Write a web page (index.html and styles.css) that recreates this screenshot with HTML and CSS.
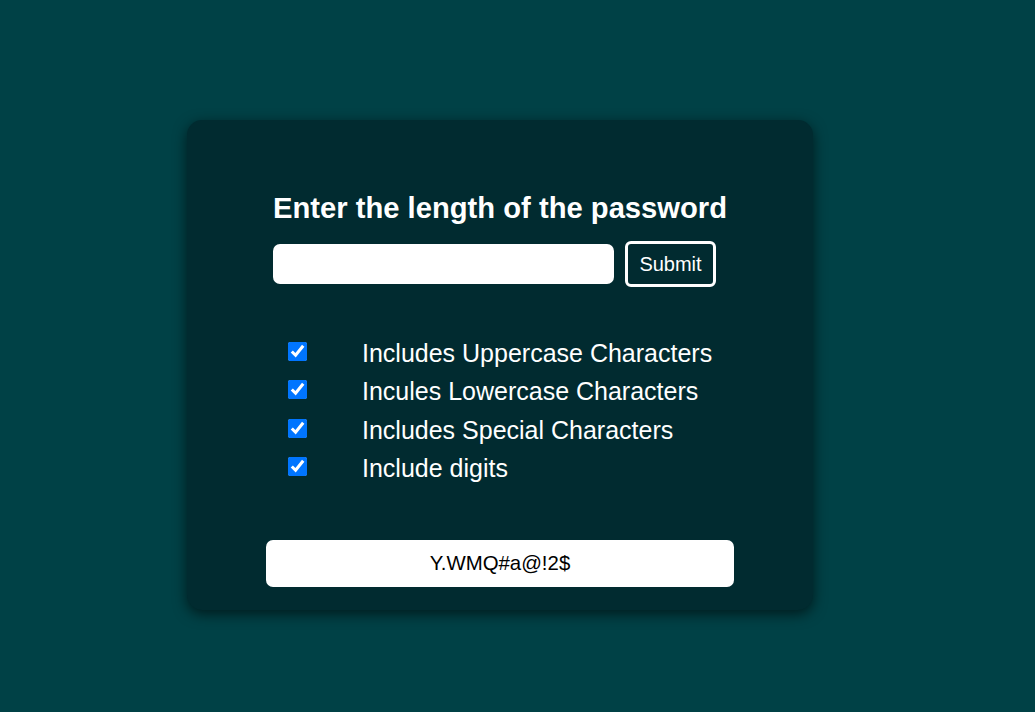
FILE: index.html
```html
<!DOCTYPE html>
<html lang="en">
<head>
<meta charset="utf-8">
<title>Password Generator</title>
<link rel="stylesheet" href="styles.css">
</head>
<body>
  <main class="card">
    <section class="form">
      <h2 class="title">Enter the length of the password</h2>
      <div class="entry">
        <input class="length" type="text">
        <button class="submit" type="button">Submit</button>
      </div>
    </section>
    <ul class="options">
      <li class="option"><input class="check" type="checkbox" checked><span class="label">Includes Uppercase Characters</span></li>
      <li class="option"><input class="check" type="checkbox" checked><span class="label">Incules Lowercase Characters</span></li>
      <li class="option"><input class="check" type="checkbox" checked><span class="label">Includes Special Characters</span></li>
      <li class="option"><input class="check" type="checkbox" checked><span class="label">Include digits</span></li>
    </ul>
    <div class="output">Y.WMQ#a@!2$</div>
  </main>
</body>
</html>
```
FILE: styles.css
```css
html, body {
  margin: 0;
  padding: 0;
}
body {
  background: #004146;
  height: 712px;
  font-family: "Liberation Sans", Arial, sans-serif;
  color: #fff;
  padding: 120px 0 0 187px;
  box-sizing: border-box;
  overflow: hidden;
}
.card {
  width: 626px;
  height: 490px;
  box-sizing: border-box;
  background: #012b30;
  border-radius: 15px;
  box-shadow: 0 4px 14px rgba(0, 0, 0, 0.6);
  padding: 73px 0 0 0;
  display: flex;
  flex-direction: column;
}
.form {
  padding-left: 86px;
  display: flex;
  flex-direction: column;
  gap: 17px;
}
.title {
  margin: 0;
  font-size: 29.2px;
  font-weight: bold;
  line-height: 31px;
}
.entry {
  display: flex;
  align-items: center;
  gap: 11px;
}
.length {
  width: 341px;
  height: 40px;
  box-sizing: border-box;
  border: none;
  border-radius: 7px;
  background: #fff;
  margin: 0;
  padding: 0 10px;
  font-size: 18px;
}
.submit {
  height: 46px;
  width: 91px;
  box-sizing: border-box;
  background: transparent;
  border: 3px solid #fff;
  border-radius: 6px;
  color: #fff;
  font-family: "Liberation Sans", Arial, sans-serif;
  font-size: 20px;
  padding: 0;
  margin: 0;
}
.options {
  list-style: none;
  margin: 52px 0 0 0;
  padding: 0 0 0 101px;
  display: flex;
  flex-direction: column;
  gap: 9.3px;
}
.option {
  display: flex;
  align-items: center;
  height: 29px;
}
.check {
  width: 19px;
  height: 19px;
  margin: 0 55px 4px 0;
  accent-color: #0075ff;
}
.label {
  font-size: 25px;
  line-height: 29px;
}
.output {
  margin: 57px 79px 0 79px;
  height: 47px;
  background: #fff;
  border-radius: 7px;
  color: #000;
  font-size: 20.4px;
  display: flex;
  align-items: center;
  justify-content: center;
}
```
